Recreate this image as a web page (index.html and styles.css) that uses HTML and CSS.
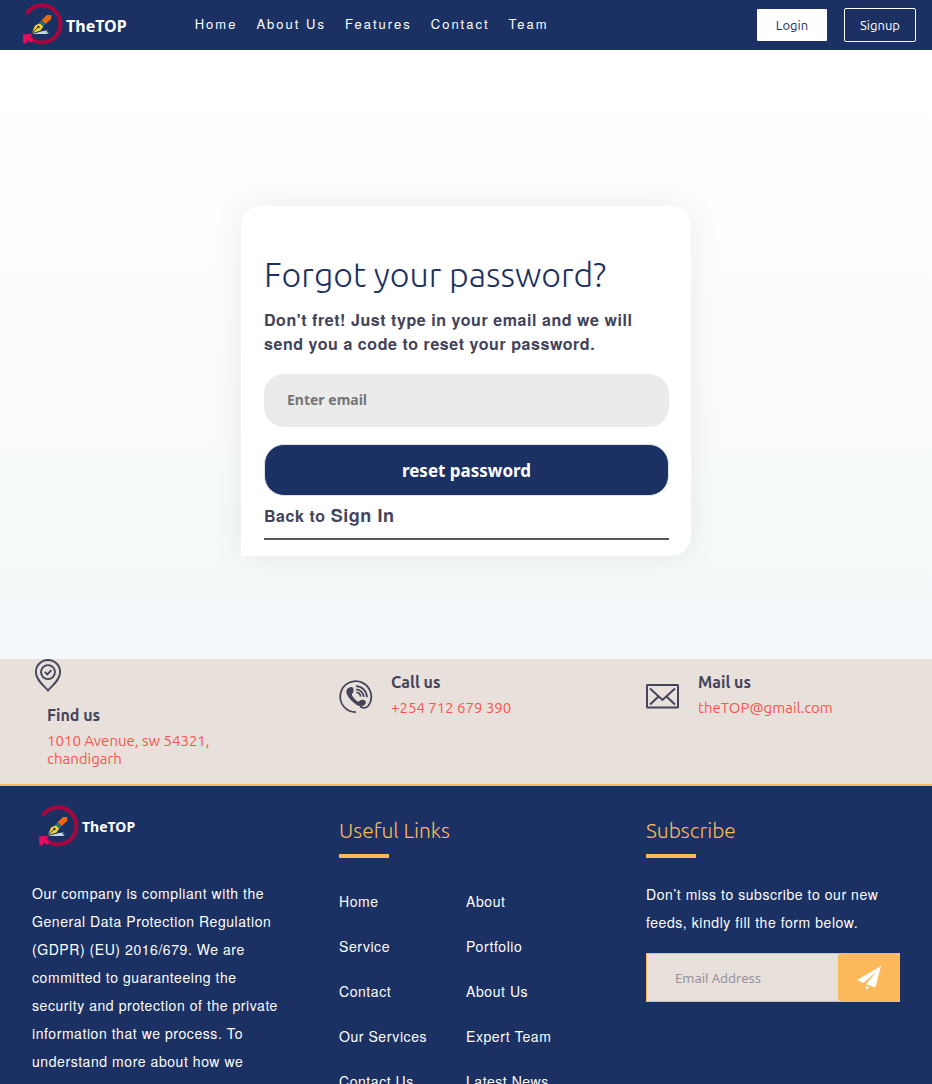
FILE: index.html
```html
<!DOCTYPE html>
<html lang="en">
<head>
<meta charset="utf-8">
<meta name="viewport" content="width=device-width, initial-scale=1">
<title>TheTOP</title>
<link rel="stylesheet" href="styles.css">
</head>
<body>
<svg class="defs" aria-hidden="true">
  <symbol id="logo" viewBox="0 0 42 46">
    <path d="M4.500 10.300A18.500 18.500 0 1 1 7 36" fill="none" stroke="#a5083f" stroke-width="4" stroke-linecap="round"/>
    <path d="M.2 32.200H9.500L7.500 35.600l3 3-2.600 2.200-3-2.600-1.200 3H.2z" fill="#ee0a5c"/>
    <path d="M9.500 32l10.500-3 5-.5-2 1.700 3 .3-2 1.500z" fill="#c5dbe6"/>
    <path d="M9 31.300l3-7.700 5-2.300 3.200 3.200-2.700 4z" fill="#f7d52f"/>
    <path d="M9.200 31l6-6" stroke="#263238" stroke-width="1"/>
    <circle cx="15.400" cy="25" r="1.200" fill="#263238"/>
    <path d="M16.300 20.500l2-2 4 4-2 2z" fill="#18788a"/>
    <path d="M18.500 18.200l5.500-5.200h4.200v4L22.500 22z" fill="#e96b10"/>
  </symbol>
</svg>
<div class="page">
  <header class="topbar">
    <a class="brand" href="#"><svg class="brand-mark" aria-hidden="true"><use href="#logo"/></svg><span>TheTOP</span></a>
    <nav class="menu">
      <a href="#">Home</a><a href="#">About Us</a><a href="#">Features</a><a href="#">Contact</a><a href="#">Team</a>
    </nav>
    <div class="actions">
      <button class="btn btn-solid" type="button">Login</button>
      <button class="btn btn-outline" type="button">Signup</button>
    </div>
  </header>
  <main class="hero">
    <form class="card">
      <h1>Forgot your password?</h1>
      <p class="lead">Don't fret! Just type in your email and we will send you a code to reset your password.</p>
      <input class="field" type="email" placeholder="Enter email" aria-label="Enter email">
      <button class="submit" type="button">reset password</button>
      <p class="back">Back to <a href="#">Sign In</a></p>
      <hr>
    </form>
  </main>
  <section class="contact columns">
    <div class="info info-stacked">
      <svg class="pin" viewBox="0 0 28 34" fill="none" stroke="#43435a" stroke-width="1.900" aria-hidden="true">
        <path d="M14 32.500C10 27.500 1.500 22 1.500 13.500a12.500 12.500 0 0 1 25 0C26.500 22 18 27.500 14 32.500z"/>
        <circle cx="14" cy="13.500" r="7.200"/>
        <path d="M10.700 13.300l2.600 2.500 4.200-4.300"/>
      </svg>
      <div class="info-text"><h2>Find us</h2><a href="#">1010 Avenue, sw 54321, chandigarh</a></div>
    </div>
    <div class="info">
      <svg class="icon" viewBox="0 0 34 34" fill="none" stroke="#43435a" stroke-width="1.700" aria-hidden="true">
        <path d="M17 32.200A15.500 15.500 0 1 1 29 26.200c-2 2-5.500 1.800-8 .3"/>
        <path d="M8 9.300c1.400-2 4.900-3.500 6.100-1.300.7 1.600.8 3.500-.2 4.900-1 .8-1.300 1.300-.8 2.500 1.300 2.500 3.200 4.400 5.600 6 1 .5 1.500 0 2.400-.9 1.200-1.200 3.900-.8 5.300.5 1.500 1.500-.4 4.200-2.400 5-3.300 1.300-8-1.800-11.500-5.300-3.600-3.700-6.400-8.300-4.500-11.400z" fill="#43435a" stroke="none"/>
        <path d="M17 6.200c6 .2 10.700 4.700 11 11M17.200 9.300c4 .2 7.300 3.400 7.600 7.600M17.400 12.400c2.200.2 4 1.900 4.200 4.200"/>
      </svg>
      <div class="info-text"><h2>Call us</h2><a href="#">+254 712 679 390</a></div>
    </div>
    <div class="info">
      <svg class="icon" viewBox="0 0 34 34" fill="none" stroke="#43435a" stroke-width="2" aria-hidden="true">
        <rect x="1" y="5" width="31" height="22.500" rx=".5"/>
        <path d="M4 8.500l12.500 11.500L29 8.500M4 24.500l8.500-8M29 24.500l-8.500-8"/>
      </svg>
      <div class="info-text"><h2>Mail us</h2><a href="#">theTOP@gmail.com</a></div>
    </div>
  </section>
  <footer class="footer columns">
    <div>
      <a class="brand brand-small" href="#"><svg class="brand-mark" aria-hidden="true"><use href="#logo"/></svg><span>TheTOP</span></a>
      <p class="copy">Our company is compliant with the General Data Protection Regulation (GDPR) (EU) 2016/679. We are committed to guaranteeing the security and protection of the private information that we process. To understand more about how we</p>
    </div>
    <div class="block">
      <h2>Useful Links</h2>
      <ul class="links">
        <li><a href="#">Home</a></li><li><a href="#">About</a></li>
        <li><a href="#">Service</a></li><li><a href="#">Portfolio</a></li>
        <li><a href="#">Contact</a></li><li><a href="#">About Us</a></li>
        <li><a href="#">Our Services</a></li><li><a href="#">Expert Team</a></li>
        <li><a href="#">Contact Us</a></li><li><a href="#">Latest News</a></li>
      </ul>
    </div>
    <div class="block">
      <h2>Subscribe</h2>
      <p class="note">Don’t miss to subscribe to our new feeds, kindly fill the form below.</p>
      <form class="subscribe">
        <input type="email" placeholder="Email Address" aria-label="Email Address">
        <button type="button" aria-label="Subscribe">
          <svg viewBox="0 0 24 24" fill="#fff" aria-hidden="true"><path d="M24 0L0 14l6.500 3L20 5 9 18.200 18.500 21.500z"/><path d="M9 20v4l3-3z"/></svg>
        </button>
      </form>
    </div>
  </footer>
</div>
</body>
</html>
```
FILE: styles.css
```css
* { box-sizing: border-box; }
body { margin: 0; color: #43435a; font-family: "Nimbus Sans", "Nimbus Sans L", "TeX Gyre Heros", "FreeSans", "Liberation Sans", Arial, sans-serif; }
h1, h2, p, ul { margin: 0; padding: 0; }
a { color: inherit; text-decoration: none; }
button, input { font: inherit; letter-spacing: normal; cursor: pointer; }
.defs { display: none; }
.page { height: 100vh; display: flex; flex-direction: column; overflow-y: auto; scrollbar-width: none; background: #1b3163; }
.page > * { flex-shrink: 0; }

.topbar { display: flex; align-items: center; height: 50px; padding: 0 16px 0 23px; background: #1b3163; color: #fff; }
.brand { display: flex; align-items: center; gap: 1px; color: #fff; font: bold 16px/24px "Noto Sans", sans-serif; }
.brand-mark { width: 42px; height: 46px; }
.brand span { padding-top: 2px; }
.menu { display: flex; gap: 19px; margin-left: 68px; padding-bottom: 4px; font-size: 13px; letter-spacing: 2px; }
.actions { display: flex; gap: 16px; margin-left: auto; }
.btn { width: 72px; height: 34px; padding: 0; border: 1px solid #fff; border-radius: 2px; font: 13px "Ubuntu", "Noto Sans", sans-serif; }
.btn-solid { background: #fff; border-color: #1b3163; color: #1b3163; }
.btn-outline { background: transparent; color: #fff; }

.hero { display: flex; justify-content: center; padding: 156px 16px 103px; background: linear-gradient(#fff, #fafcfb 55%, #f4f8fa); }
.card { width: 100%; max-width: 450px; padding: 44px 22px 16px 23px; border-radius: 20px 20px 20px 0; background: #fff; box-shadow: 0 0 32px rgba(0, 0, 0, .08); }
.card h1 { color: #1b3163; font: 300 34px/48px "Ubuntu", "Open Sans", sans-serif; }
.lead { margin-top: 10px; font-size: 16px; font-weight: bold; line-height: 24px; letter-spacing: .035em; }
.field { display: block; width: 100%; height: 53px; margin: 18px 0 17px; padding: 0 23px 2px; border: 0; border-radius: 20px; background: #ebebeb; font: bold 14px "Noto Sans", sans-serif; }
.field::placeholder { color: #757575; }
.submit { display: block; width: 100%; height: 52px; border: 1px solid #e0e3ea; border-radius: 20px; background: #1b3163; color: #fff; font: bold 17px "Noto Sans", sans-serif; }
.back { margin-top: 5px; font-size: 16px; font-weight: bold; line-height: 28px; letter-spacing: .035em; }
.back a { font-size: 18px; }
.card hr { height: 2px; margin: 8px 0 0; border: 0; background: #58585c; }

.columns { display: grid; grid-template-columns: repeat(3, minmax(0, 1fr)); gap: 53px; padding: 0 32px; }
.contact { min-height: 127px; border-bottom: 2px solid #fbb95a; background: #e8e0da; }
.info { display: flex; gap: 18px; padding-top: 14px; }
.info-stacked { flex-direction: column; gap: 14px; padding: 0 0 16px 2px; }
.info-stacked .info-text { padding-left: 13px; }
.pin { width: 28px; height: 33px; }
.icon { width: 34px; height: 34px; margin-top: 7px; }
.info h2 { margin-bottom: 8px; font: bold 16px/18px "Ubuntu", "Noto Sans", sans-serif; }
.info a { display: block; color: #f9564f; font: 15px/18px "Ubuntu", "Noto Sans", sans-serif; }

.footer { padding-top: 18px; background: #1b3163; color: #fff; }
.brand-small { margin-left: 7px; font-size: 14px; }
.brand-small span { padding-top: 0; }
.copy, .note { font-size: 14px; line-height: 28px; letter-spacing: .04em; }
.copy { margin-top: 29px; }
.block { padding-top: 12px; }
.block h2 { color: #fbb95a; font: 300 21px/28px "Ubuntu", "Open Sans", sans-serif; }
.block h2::after { content: ""; display: block; width: 50px; height: 4px; margin-top: 10px; background: #fbb95a; }
.links { display: grid; grid-template-columns: 1fr 1fr; row-gap: 17px; margin-top: 29px; list-style: none; font-size: 14px; line-height: 28px; letter-spacing: .04em; }
.note { margin-top: 22px; }
.subscribe { display: flex; height: 49px; margin-top: 17px; border: 1px solid #fbb95a; background: #e8e0da; }
.subscribe input { flex: 1; min-width: 0; padding: 0 28px; border: 0; background: transparent; font: 13px "Noto Sans", sans-serif; }
.subscribe input::placeholder { color: #96929c; }
.subscribe button { width: 61px; padding: 0; border: 0; border-radius: 3px; background: #fbb95a; }
.subscribe svg { display: block; width: 24px; height: 24px; margin: 0 auto; }
```
